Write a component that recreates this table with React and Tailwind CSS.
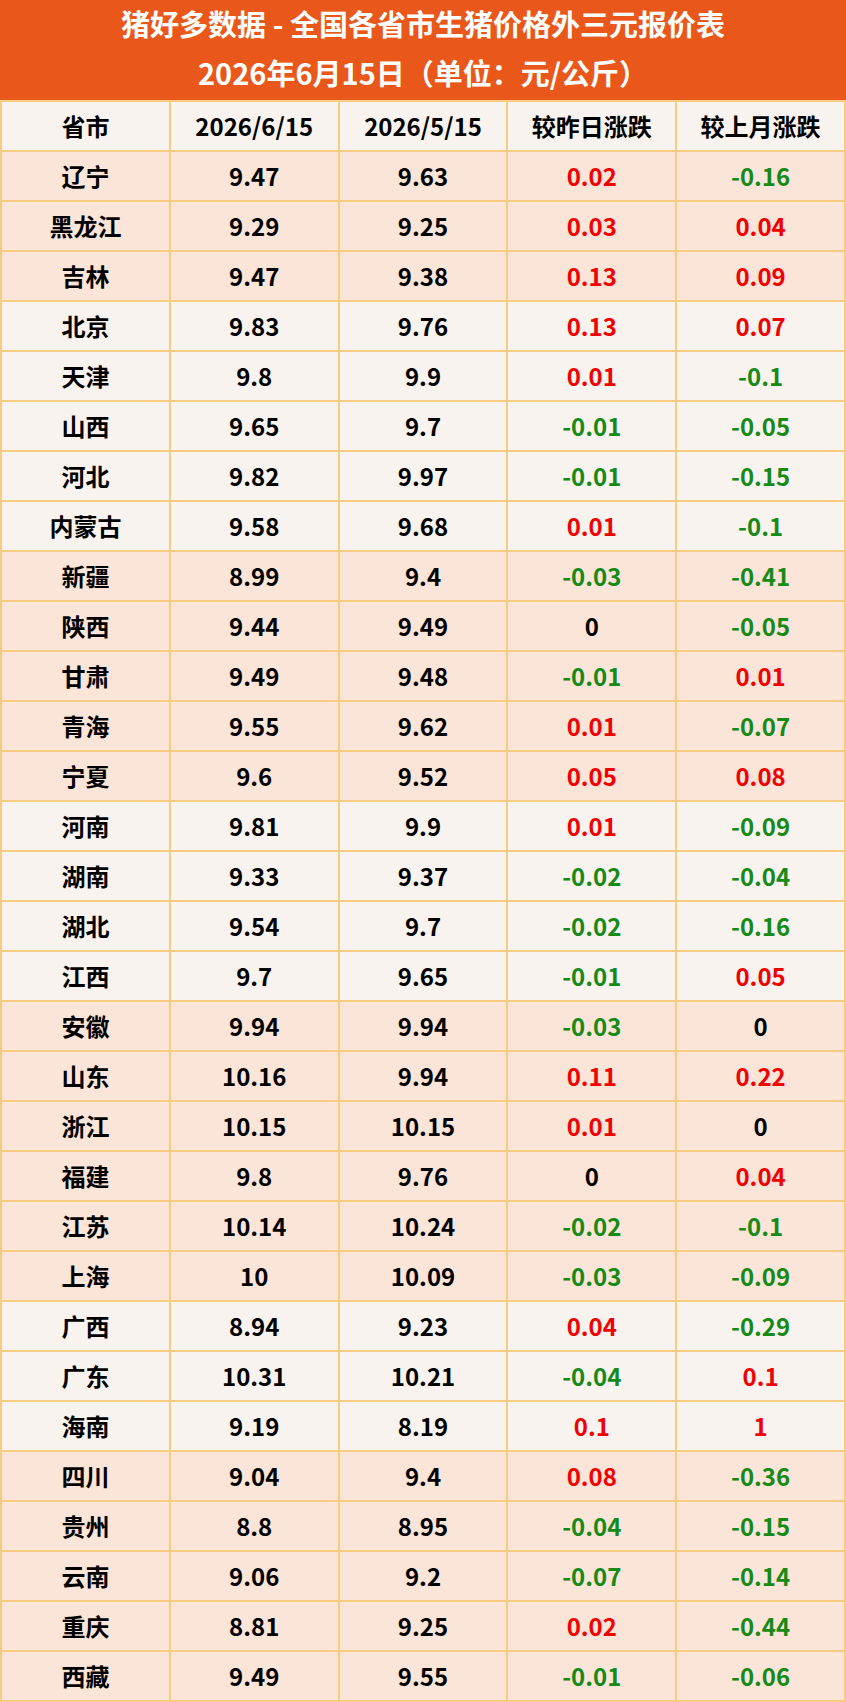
import React from "react";

const rows = [
  ["辽宁", "9.47", "9.63", "0.02", "-0.16", 1],
  ["黑龙江", "9.29", "9.25", "0.03", "0.04", 1],
  ["吉林", "9.47", "9.38", "0.13", "0.09", 1],
  ["北京", "9.83", "9.76", "0.13", "0.07", 0],
  ["天津", "9.8", "9.9", "0.01", "-0.1", 0],
  ["山西", "9.65", "9.7", "-0.01", "-0.05", 0],
  ["河北", "9.82", "9.97", "-0.01", "-0.15", 0],
  ["内蒙古", "9.58", "9.68", "0.01", "-0.1", 0],
  ["新疆", "8.99", "9.4", "-0.03", "-0.41", 1],
  ["陕西", "9.44", "9.49", "0", "-0.05", 1],
  ["甘肃", "9.49", "9.48", "-0.01", "0.01", 1],
  ["青海", "9.55", "9.62", "0.01", "-0.07", 1],
  ["宁夏", "9.6", "9.52", "0.05", "0.08", 1],
  ["河南", "9.81", "9.9", "0.01", "-0.09", 0],
  ["湖南", "9.33", "9.37", "-0.02", "-0.04", 0],
  ["湖北", "9.54", "9.7", "-0.02", "-0.16", 0],
  ["江西", "9.7", "9.65", "-0.01", "0.05", 0],
  ["安徽", "9.94", "9.94", "-0.03", "0", 1],
  ["山东", "10.16", "9.94", "0.11", "0.22", 1],
  ["浙江", "10.15", "10.15", "0.01", "0", 1],
  ["福建", "9.8", "9.76", "0", "0.04", 1],
  ["江苏", "10.14", "10.24", "-0.02", "-0.1", 1],
  ["上海", "10", "10.09", "-0.03", "-0.09", 1],
  ["广西", "8.94", "9.23", "0.04", "-0.29", 0],
  ["广东", "10.31", "10.21", "-0.04", "0.1", 0],
  ["海南", "9.19", "8.19", "0.1", "1", 0],
  ["四川", "9.04", "9.4", "0.08", "-0.36", 1],
  ["贵州", "8.8", "8.95", "-0.04", "-0.15", 1],
  ["云南", "9.06", "9.2", "-0.07", "-0.14", 1],
  ["重庆", "8.81", "9.25", "0.02", "-0.44", 1],
  ["西藏", "9.49", "9.55", "-0.01", "-0.06", 1],
];

function changeColor(v) {
  const n = parseFloat(v);
  if (n > 0) return "text-[#f00000]";
  if (n < 0) return "text-[#168a16]";
  return "text-black";
}

function Cell({ children, bg, color = "text-black" }) {
  return (
    <div className={`h-[48px] flex items-center justify-center text-[24px] font-bold ${bg} ${color}`}>
      {children}
    </div>
  );
}

export default function App() {
  return (
    <div
      className="w-[846px] h-[1702px] bg-[#f9f3ef]"
      style={{ fontFamily: '"Noto Sans CJK SC", "Noto Sans", sans-serif' }}
    >
      <div className="h-[100px] bg-[#e9581a] flex flex-col items-center text-white font-bold text-[29px]">
        <div className="h-[48px] flex items-center">猪好多数据 - 全国各省市生猪价格外三元报价表</div>
        <div className="h-[52px] pb-[2px] flex items-center">2026年6月15日（单位：元/公斤）</div>
      </div>
      <div className="grid grid-cols-5 gap-[2px] p-[2px] bg-[#f8cc80]">
        <Cell bg="bg-[#f9f3ef]">省市</Cell>
        <Cell bg="bg-[#f9f3ef]">2026/6/15</Cell>
        <Cell bg="bg-[#f9f3ef]">2026/5/15</Cell>
        <Cell bg="bg-[#f9f3ef]">较昨日涨跌</Cell>
        <Cell bg="bg-[#f9f3ef]">较上月涨跌</Cell>
        {rows.map((r) => {
          const bg = r[5] ? "bg-[#fbe4d8]" : "bg-[#f9f3ef]";
          return (
            <React.Fragment key={r[0]}>
              <Cell bg={bg}>{r[0]}</Cell>
              <Cell bg={bg}>{r[1]}</Cell>
              <Cell bg={bg}>{r[2]}</Cell>
              <Cell bg={bg} color={changeColor(r[3])}>{r[3]}</Cell>
              <Cell bg={bg} color={changeColor(r[4])}>{r[4]}</Cell>
            </React.Fragment>
          );
        })}
      </div>
    </div>
  );
}
